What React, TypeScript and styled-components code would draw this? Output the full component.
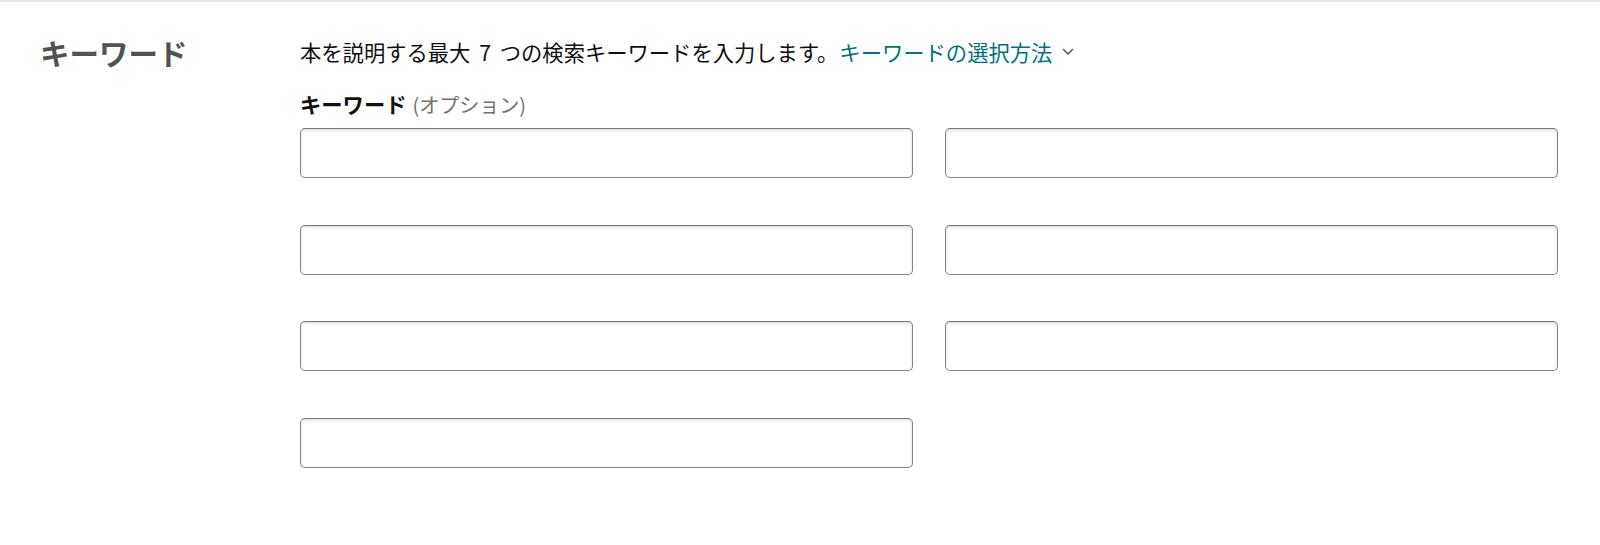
import styled, { createGlobalStyle } from "styled-components";

const GlobalStyle = createGlobalStyle`
  html, body {
    margin: 0;
    padding: 0;
    background: #ffffff;
  }
  body {
    font-family: "Noto Sans CJK JP", "Noto Sans", "Liberation Sans", sans-serif;
    color: #0f1111;
  }
`;

export const KeywordSection = styled.section`
  display: grid;
  grid-template-columns: 260px 1fr;
  padding: 31px 42px 40px 40px;
  border-top: 2px solid #e7e7e7;
  min-height: 545px;
  box-sizing: border-box;
`;

export const SectionTitle = styled.h2`
  margin: 0;
  font-size: 29.5px;
  line-height: 39px;
  font-weight: 700;
  color: #4f5353;
`;

export const SectionBody = styled.div`
  display: flex;
  flex-direction: column;
`;

export const Description = styled.p`
  margin: 4px 0 0;
  font-size: 21.3px;
  line-height: 30px;
  word-spacing: 4px;
  display: flex;
  align-items: center;
  white-space: pre;
`;

export const HelpLink = styled.a`
  color: #007185;
  text-decoration: none;
  display: inline-flex;
  align-items: center;
  gap: 10px;
  margin-left: 1px;
  word-spacing: 0;
  cursor: pointer;
`;

export const FieldLabel = styled.label`
  margin-top: 22px;
  font-size: 21.3px;
  line-height: 30px;
  font-weight: 700;
  color: #0f1111;
`;

export const OptionalNote = styled.span`
  font-weight: 400;
  font-size: 20px;
  color: #6f7373;
  margin-left: 6px;
`;

export const KeywordGrid = styled.div`
  margin-top: 8px;
  display: grid;
  grid-template-columns: 1fr 1fr;
  column-gap: 32px;
  row-gap: 46.67px;
`;

export const KeywordInput = styled.input`
  height: 50px;
  box-sizing: border-box;
  width: 100%;
  border: 1.5px solid #808484;
  border-top-color: #767a7a;
  border-radius: 5px;
  box-shadow: inset 0 1.5px 3px rgba(15, 17, 17, 0.15);
  padding: 0 12px;
  font-size: 20px;
  font-family: inherit;
  outline: none;
  background: #ffffff;
`;

const Chevron = () => (
  <svg width="12" height="8" viewBox="0 0 12 8" aria-hidden="true">
    <path
      d="M1.5 1.5 L6 6 L10.5 1.5"
      fill="none"
      stroke="#565959"
      strokeWidth="1.5"
      strokeLinecap="round"
      strokeLinejoin="round"
    />
  </svg>
);

const slots = [1, 2, 3, 4, 5, 6, 7];

export default function App() {
  return (
    <>
      <GlobalStyle />
      <KeywordSection>
        <SectionTitle>キーワード</SectionTitle>
        <SectionBody>
          <Description>
            {"本を説明する最大 7 つの検索キーワードを入力します。"}
            <HelpLink>
              キーワードの選択方法
              <Chevron />
            </HelpLink>
          </Description>
          <FieldLabel>
            キーワード<OptionalNote>(オプション)</OptionalNote>
          </FieldLabel>
          <KeywordGrid>
            {slots.map((n) => (
              <KeywordInput key={n} type="text" aria-label={`キーワード ${n}`} />
            ))}
          </KeywordGrid>
        </SectionBody>
      </KeywordSection>
    </>
  );
}
